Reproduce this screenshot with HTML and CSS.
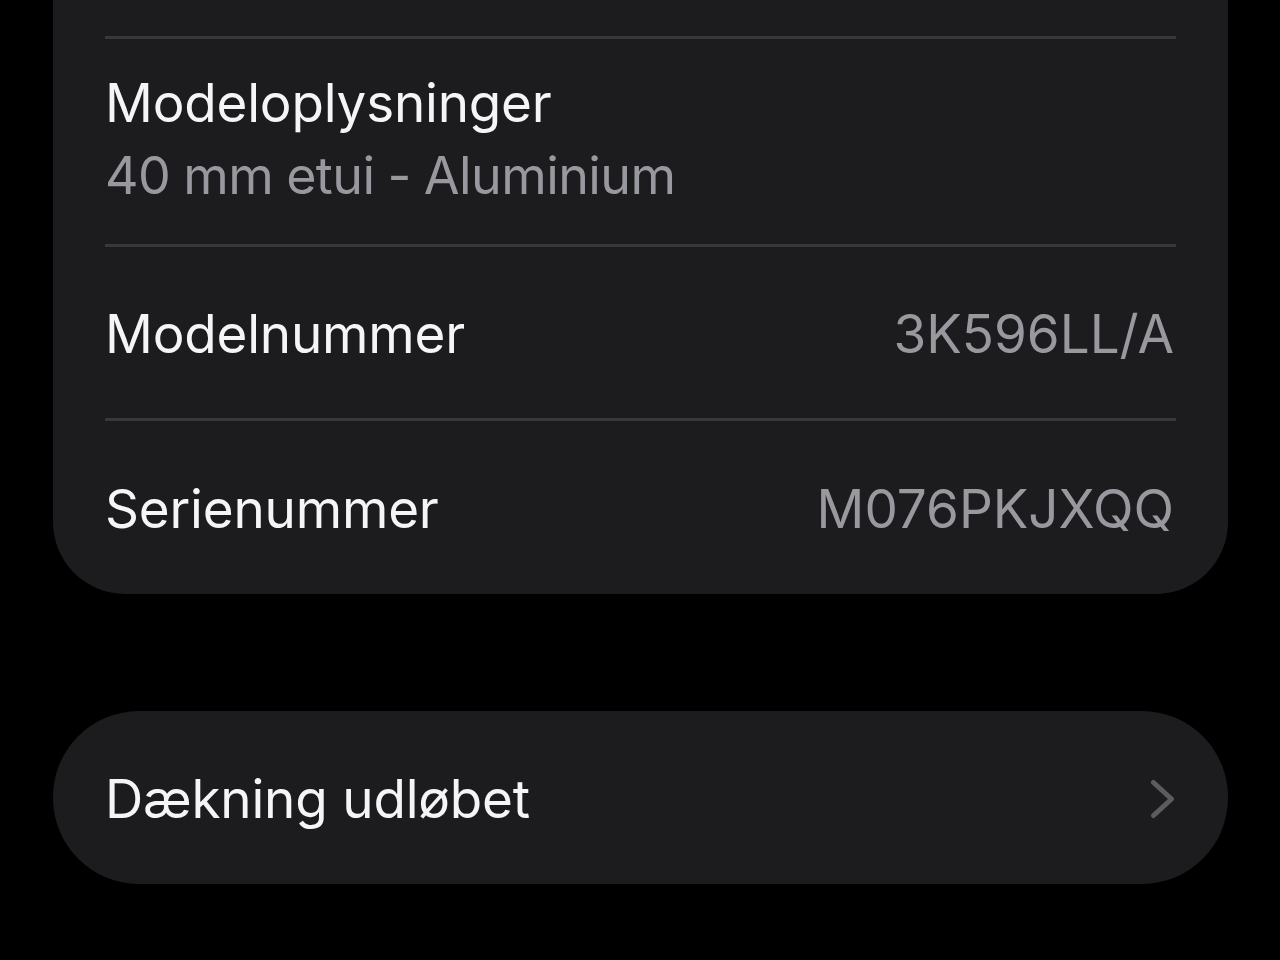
FILE: index.html
```html
<!DOCTYPE html>
<html lang="da">
<head>
<meta charset="utf-8">
<link rel="stylesheet" href="styles.css">
</head>
<body>
<div class="page">
  <section class="card card-info">
    <div class="row row-top"></div>
    <div class="row row-stack">
      <div class="title">Modeloplysninger</div>
      <div class="subtitle">40 mm etui - Aluminium</div>
    </div>
    <div class="row row-pair">
      <div class="title">Modelnummer</div>
      <div class="value">3K596LL/A</div>
    </div>
    <div class="row row-pair row-last">
      <div class="title">Serienummer</div>
      <div class="value">M076PKJXQQ</div>
    </div>
  </section>

  <section class="card card-link">
    <div class="row row-pair row-last">
      <div class="title">Dækning udløbet</div>
      <svg class="chevron" width="26" height="40" viewBox="0 0 26 40" aria-hidden="true">
        <path d="M3.5 3.5 L21.5 20 L3.5 36.5" fill="none" stroke="#5c5c60" stroke-width="5" stroke-linecap="round" stroke-linejoin="round"/>
      </svg>
    </div>
  </section>
</div>
</body>
</html>
```

FILE: styles.css
```css
html, body {
  margin: 0;
  padding: 0;
  background: #000;
  width: 1280px;
  height: 960px;
  overflow: hidden;
}

body {
  font-family: Inter, "Noto Sans", "Liberation Sans", sans-serif;
  color: #f5f5f7;
  -webkit-font-smoothing: antialiased;
}

.page {
  display: flex;
  flex-direction: column;
  gap: 117px;
  margin-top: -100px;
}

.card {
  background: #1c1c1e;
  margin: 0 52px 0 53px;
  padding: 0 52px;
}

.card-info {
  border-radius: 72px;
}

.card-link {
  border-radius: 86px;
}

.row {
  display: flex;
  box-sizing: border-box;
  border-bottom: 3px solid #38383a;
}

.row-last {
  border-bottom: none;
}

.row-top {
  height: 139px;
}

.row-stack {
  height: 208px;
  flex-direction: column;
  justify-content: center;
  gap: 7px;
  padding-bottom: 4px;
}

.row-pair {
  height: 174px;
  align-items: center;
  justify-content: space-between;
  padding-top: 3px;
}

.card-info .row-last {
  height: 173px;
}

.card-link .row-pair {
  height: 173px;
}

.title {
  font-size: 53px;
  line-height: 66px;
  font-weight: 400;
  letter-spacing: -0.2px;
}

.value {
  font-size: 53px;
  line-height: 66px;
  color: #98989f;
  letter-spacing: 0;
  padding-right: 2px;
}

.subtitle {
  font-size: 52px;
  line-height: 66px;
  color: #98989f;
  letter-spacing: -0.6px;
  word-spacing: -1px;
}

.chevron {
  display: block;
}
```
